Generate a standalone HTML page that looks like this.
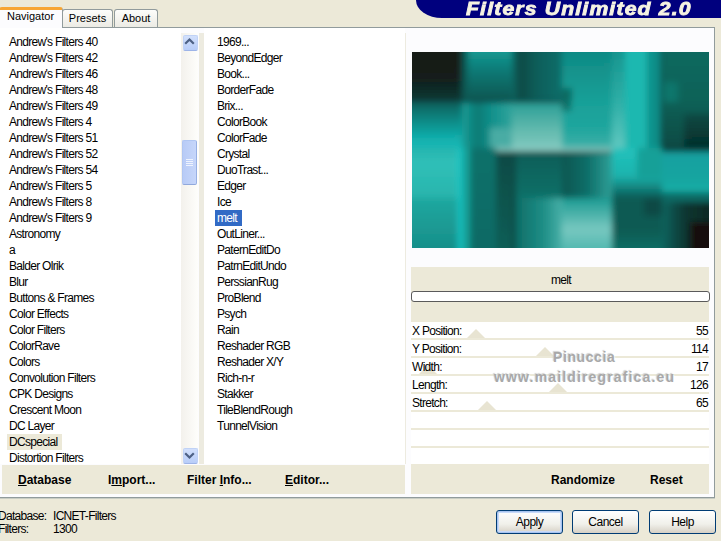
<!DOCTYPE html>
<html><head><meta charset="utf-8">
<style>
*{margin:0;padding:0;box-sizing:border-box}
html,body{width:721px;height:541px;overflow:hidden;background:#ECE9D8;font-family:"Liberation Sans",sans-serif;font-size:11px;color:#000}
.a{position:absolute}
#banner{left:416px;top:0;width:305px;height:18px;background:#00007E;border-bottom-left-radius:26px 18px}
#title{left:466px;top:-1px;font-size:18px;line-height:20px;font-weight:bold;font-style:italic;color:#F6F3E2;white-space:nowrap;letter-spacing:1px;transform-origin:0 0;transform:scaleX(1.175);-webkit-text-stroke:0.8px #F6F3E2}
.tab{top:9px;height:18px;background:linear-gradient(#FDFDFB,#ECEBE4);border:1px solid #919B9C;border-bottom:none;border-radius:3px 3px 0 0;text-align:center;line-height:16px}
#tnav{left:-1px;top:7px;width:64px;height:21px;background:#FCFCFE;border:1px solid #919B9C;border-top:3px solid #F7A533;border-bottom:none;border-radius:3px 3px 0 0;line-height:12px;padding-left:7px;z-index:2}
#panel{left:0;top:27px;width:715px;height:471px;background:#FCFCFE;border:1px solid #919B9C;border-left:none}
#list1{left:0;top:28px;width:181px;height:436px;background:#fff;overflow:hidden}
#list2{left:204px;top:28px;width:201px;height:436px;background:#fff;overflow:hidden}
.row{position:absolute;height:16px;line-height:16px;white-space:nowrap;font-size:12px;letter-spacing:-0.7px}
#sb{left:181px;top:33px;width:17px;height:431px;background:linear-gradient(90deg,#F3F1EC,#FEFEFB)}
#sep{left:199px;top:33px;width:5px;height:431px;background:#EDEBE0}
.sbbtn{position:absolute;left:2px;width:15px;height:16px;background:linear-gradient(#C9DAFC,#B3CAF7);border:1px solid #B8CCF5;border-radius:2px}
#thumb{left:183px;top:140px;width:15px;height:45px;background:linear-gradient(90deg,#BCCFF8,#C5D6FA);border:1px solid #A0B8EC;border-radius:2px}
#prev{left:412px;top:52px;width:297px;height:196px;background:#0d8080;overflow:hidden}
#rsep{left:405px;top:33px;width:1px;height:431px;background:#EDEBE0}
#meltbar{left:411px;top:267px;width:298px;height:56px;background:#ECE9D8}
#slider{left:411px;top:291px;width:299px;height:11px;background:#fff;border:1px solid #5A5A5A;border-radius:3px}
.prow{position:absolute;left:411px;width:298px;height:18px;background:#fff;border-bottom:2px solid #ECE9D8}
.plab{position:absolute;left:1px;top:3px;line-height:13px;font-size:12px;letter-spacing:-0.7px;white-space:nowrap}
.pval{position:absolute;right:1px;top:3px;line-height:13px;font-size:12px;letter-spacing:-0.7px}
.tri{position:absolute;width:0;height:0;border-left:9px solid transparent;border-right:9px solid transparent;border-bottom:9px solid #E8E4D2;top:7px}
#bbar1{left:2px;top:465px;width:403px;height:29px;background:#ECE9D8}
#bbar2{left:411px;top:465px;width:298px;height:29px;background:#ECE9D8}
.bb{position:absolute;top:473px;margin-left:-1px;font-weight:bold;line-height:14px;font-size:12px;white-space:nowrap}
.u{text-decoration:underline}
.btn{position:absolute;top:510px;width:67px;height:24px;font-size:12px;letter-spacing:-0.5px;border:1px solid #003C74;border-radius:3px;background:linear-gradient(#FFFFFF,#F0F0EA 60%,#D6D0C5);text-align:center;line-height:23px}
#apply{box-shadow:inset 0 0 0 1px #A8C4F0, inset 0 0 0 2px #C8DAF8}
.st{position:absolute;line-height:13px;white-space:nowrap;font-size:12px;letter-spacing:-0.7px}
</style></head><body>
<div id="banner" class="a"></div>
<div id="title" class="a">Filters Unlimited 2.0</div>

<div id="panel" class="a"></div>
<div class="a" style="left:0;top:498px;width:715px;height:1px;background:#C9CDC4"></div>
<div class="tab a" style="left:62px;width:51px">Presets</div>
<div class="tab a" style="left:114px;width:44px">About</div>
<div id="tnav" class="a">Navigator</div>

<div id="list1" class="a"><div class="a" style="left:7px;top:406px;width:55px;height:16px;background:#ECE9D8"></div><div class="row" style="top:6px;left:9px">Andrew's Filters 40</div><div class="row" style="top:22px;left:9px">Andrew's Filters 42</div><div class="row" style="top:38px;left:9px">Andrew's Filters 46</div><div class="row" style="top:54px;left:9px">Andrew's Filters 48</div><div class="row" style="top:70px;left:9px">Andrew's Filters 49</div><div class="row" style="top:86px;left:9px">Andrew's Filters 4</div><div class="row" style="top:102px;left:9px">Andrew's Filters 51</div><div class="row" style="top:118px;left:9px">Andrew's Filters 52</div><div class="row" style="top:134px;left:9px">Andrew's Filters 54</div><div class="row" style="top:150px;left:9px">Andrew's Filters 5</div><div class="row" style="top:166px;left:9px">Andrew's Filters 8</div><div class="row" style="top:182px;left:9px">Andrew's Filters 9</div><div class="row" style="top:198px;left:9px">Astronomy</div><div class="row" style="top:214px;left:9px">a</div><div class="row" style="top:230px;left:9px">Balder Olrik</div><div class="row" style="top:246px;left:9px">Blur</div><div class="row" style="top:262px;left:9px">Buttons &amp; Frames</div><div class="row" style="top:278px;left:9px">Color Effects</div><div class="row" style="top:294px;left:9px">Color Filters</div><div class="row" style="top:310px;left:9px">ColorRave</div><div class="row" style="top:326px;left:9px">Colors</div><div class="row" style="top:342px;left:9px">Convolution Filters</div><div class="row" style="top:358px;left:9px">CPK Designs</div><div class="row" style="top:374px;left:9px">Crescent Moon</div><div class="row" style="top:390px;left:9px">DC Layer</div><div class="row" style="top:406px;left:9px">DCspecial</div><div class="row" style="top:422px;left:9px">Distortion Filters</div></div>
<div id="sep" class="a"></div>
<div id="sb" class="a"></div>
<div class="a" style="left:183px;top:35px;width:15px;height:16px;background:linear-gradient(#D2E0FC,#B8CDF8);border:1px solid #C0D2F6;border-bottom:1px solid #9DB4E8;border-radius:2px"><svg width="13" height="14" style="position:absolute;left:0;top:0"><path d="M1.2 7.8 L5.5 3.5 L9.8 7.8" stroke="#4D6185" stroke-width="2.2" fill="none"/></svg></div>
<div class="a" style="left:183px;top:448px;width:15px;height:16px;background:linear-gradient(#D2E0FC,#B8CDF8);border:1px solid #C0D2F6;border-bottom:1px solid #9DB4E8;border-radius:2px"><svg width="13" height="14" style="position:absolute;left:0;top:0"><path d="M1.2 4.2 L5.5 8.5 L9.8 4.2" stroke="#4D6185" stroke-width="2.2" fill="none"/></svg></div>
<div class="a" style="left:182px;top:140px;width:15px;height:45px;background:linear-gradient(90deg,#B8CBF6,#C6D6FA);border:1px solid #B0C6F2;border-right-color:#98B0E4;border-bottom-color:#90A8DC;border-radius:2px"><div class="a" style="left:3px;top:18px;width:7px;height:1px;background:#EEF3FE;box-shadow:0 2px 0 #EEF3FE,0 4px 0 #EEF3FE,0 6px 0 #EEF3FE"></div></div>
<div id="list2" class="a"><div class="a" style="left:11px;top:182px;width:27px;height:16px;background:#316AC5"></div><div class="row" style="top:6px;left:13px">1969...</div><div class="row" style="top:22px;left:13px">BeyondEdger</div><div class="row" style="top:38px;left:13px">Book...</div><div class="row" style="top:54px;left:13px">BorderFade</div><div class="row" style="top:70px;left:13px">Brix...</div><div class="row" style="top:86px;left:13px">ColorBook</div><div class="row" style="top:102px;left:13px">ColorFade</div><div class="row" style="top:118px;left:13px">Crystal</div><div class="row" style="top:134px;left:13px">DuoTrast...</div><div class="row" style="top:150px;left:13px">Edger</div><div class="row" style="top:166px;left:13px">Ice</div><div class="row" style="top:182px;left:13px" ><span style="color:#fff">melt</span></div><div class="row" style="top:198px;left:13px">OutLiner...</div><div class="row" style="top:214px;left:13px">PaternEditDo</div><div class="row" style="top:230px;left:13px">PatrnEditUndo</div><div class="row" style="top:246px;left:13px">PerssianRug</div><div class="row" style="top:262px;left:13px">ProBlend</div><div class="row" style="top:278px;left:13px">Psych</div><div class="row" style="top:294px;left:13px">Rain</div><div class="row" style="top:310px;left:13px">Reshader RGB</div><div class="row" style="top:326px;left:13px">Reshader X/Y</div><div class="row" style="top:342px;left:13px">Rich-n-r</div><div class="row" style="top:358px;left:13px">Stakker</div><div class="row" style="top:374px;left:13px">TileBlendRough</div><div class="row" style="top:390px;left:13px">TunnelVision</div></div>
<div id="rsep" class="a"></div>

<div id="prev" class="a"><svg width="297" height="196" style="position:absolute;left:0;top:0"><defs><linearGradient id="q0" x1="0" y1="0" x2="0" y2="1"><stop offset="0" stop-color="#141a17"/><stop offset="0.6" stop-color="#131d1a"/><stop offset="1" stop-color="#0c3a36"/></linearGradient><linearGradient id="q1" x1="0" y1="0" x2="0" y2="1"><stop offset="0" stop-color="#0b5e5a"/><stop offset="0.45" stop-color="#0f8e8a"/><stop offset="0.8" stop-color="#12b0ae"/><stop offset="1" stop-color="#16b8b5"/></linearGradient><linearGradient id="q2" x1="0" y1="0" x2="0" y2="1"><stop offset="0" stop-color="#18aaa2"/><stop offset="0.5" stop-color="#0e7a76"/><stop offset="1" stop-color="#0a5550"/></linearGradient><linearGradient id="q3" x1="0" y1="0" x2="1" y2="0"><stop offset="0" stop-color="#15a09a"/><stop offset="0.3" stop-color="#0e7a74"/><stop offset="0.6" stop-color="#12918c"/><stop offset="1" stop-color="#30a49c"/></linearGradient><linearGradient id="q4" x1="0" y1="0" x2="1" y2="0"><stop offset="0" stop-color="#0b6a65"/><stop offset="0.15" stop-color="#094a45"/><stop offset="0.5" stop-color="#0b5e5a"/><stop offset="1" stop-color="#0c6e6a"/></linearGradient><linearGradient id="q5" x1="0" y1="0" x2="0" y2="1"><stop offset="0" stop-color="#0d8580"/><stop offset="1" stop-color="#18a098"/></linearGradient><linearGradient id="q6" x1="0" y1="0" x2="0" y2="1"><stop offset="0" stop-color="#2a9e96"/><stop offset="0.6" stop-color="#62baae"/><stop offset="1" stop-color="#80c8be"/></linearGradient><linearGradient id="q7" x1="0" y1="0" x2="0" y2="1"><stop offset="0" stop-color="#18a098"/><stop offset="0.6" stop-color="#20a69e"/><stop offset="1" stop-color="#40b0a8"/></linearGradient><linearGradient id="q8" x1="0" y1="0" x2="0" y2="1"><stop offset="0" stop-color="#10908a"/><stop offset="0.6" stop-color="#30b0a8"/><stop offset="1" stop-color="#60c8c0"/></linearGradient><linearGradient id="q9" x1="0" y1="0" x2="0" y2="1"><stop offset="0" stop-color="#0c6a60"/><stop offset="1" stop-color="#0b6258"/></linearGradient><linearGradient id="q10" x1="0" y1="0" x2="0" y2="1"><stop offset="0" stop-color="#0b6056"/><stop offset="1" stop-color="#094a44"/></linearGradient><linearGradient id="q11" x1="0" y1="0" x2="0" y2="1"><stop offset="0" stop-color="#0a4a44"/><stop offset="1" stop-color="#052e2a"/></linearGradient><linearGradient id="q12" x1="0" y1="0" x2="0" y2="1"><stop offset="0" stop-color="#26b4ae"/><stop offset="0.3" stop-color="#30c0b8"/><stop offset="1" stop-color="#28b4ac"/></linearGradient><linearGradient id="q13" x1="0" y1="0" x2="0" y2="1"><stop offset="0" stop-color="#20a8a0"/><stop offset="1" stop-color="#158a85"/></linearGradient><linearGradient id="q14" x1="0" y1="0" x2="0" y2="1"><stop offset="0" stop-color="#0e706a"/><stop offset="1" stop-color="#0c6a64"/></linearGradient><linearGradient id="q15" x1="0" y1="0" x2="0" y2="1"><stop offset="0" stop-color="#0a4a45"/><stop offset="1" stop-color="#0c6058"/></linearGradient><linearGradient id="q16" x1="0" y1="0" x2="0" y2="1"><stop offset="0" stop-color="#0c5e58"/><stop offset="1" stop-color="#107068"/></linearGradient><linearGradient id="q17" x1="0" y1="0" x2="1" y2="0"><stop offset="0" stop-color="#0e6e68"/><stop offset="0.6" stop-color="#1e8e86"/><stop offset="1" stop-color="#48b0a8"/></linearGradient><linearGradient id="q18" x1="0" y1="0" x2="1" y2="0"><stop offset="0" stop-color="#0b5550"/><stop offset="0.5" stop-color="#0e6e68"/><stop offset="1" stop-color="#30a098"/></linearGradient><linearGradient id="q19" x1="0" y1="0" x2="0" y2="1"><stop offset="0" stop-color="#1a9a92"/><stop offset="0.5" stop-color="#78c8c0"/><stop offset="1" stop-color="#40b0a8"/></linearGradient><linearGradient id="q20" x1="0" y1="0" x2="0" y2="1"><stop offset="0" stop-color="#22c2bc"/><stop offset="0.55" stop-color="#1cb4ae"/><stop offset="1" stop-color="#0a5a55"/></linearGradient><linearGradient id="q21" x1="0" y1="0" x2="0" y2="1"><stop offset="0" stop-color="#0b5a52"/><stop offset="0.5" stop-color="#0b5a52"/><stop offset="1" stop-color="#10786f"/></linearGradient><linearGradient id="q22" x1="0" y1="0" x2="0" y2="1"><stop offset="0" stop-color="#14a0a0"/><stop offset="0.7" stop-color="#15a5a0"/><stop offset="1" stop-color="#18b0a8"/></linearGradient><linearGradient id="q23" x1="0" y1="0" x2="1" y2="0"><stop offset="0" stop-color="#0d6560"/><stop offset="0.4" stop-color="#0a3530"/><stop offset="1" stop-color="#0a2420"/></linearGradient><filter id="bl" x="-10%" y="-10%" width="120%" height="120%"><feGaussianBlur stdDeviation="3.2"/></filter></defs><rect width="297" height="196" fill="#0e7a76"/><g filter="url(#bl)"><rect x="-12" y="-12" width="62" height="62" fill="url(#q0)"/><rect x="-12" y="50" width="62" height="46" fill="url(#q1)"/><rect x="50" y="-12" width="50" height="61" fill="url(#q2)"/><rect x="50" y="-12" width="6" height="61" fill="#0c5a55"/><rect x="50" y="49" width="50" height="47" fill="url(#q3)"/><rect x="78" y="76" width="22" height="20" fill="#48aca4"/><rect x="100" y="-12" width="50" height="61" fill="url(#q4)"/><rect x="150" y="-12" width="50" height="61" fill="url(#q5)"/><rect x="150" y="36" width="10" height="13" fill="#0b6a62"/><rect x="50" y="48" width="100" height="3" fill="#0a4a48"/><rect x="100" y="51" width="50" height="45" fill="url(#q6)"/><rect x="150" y="49" width="50" height="47" fill="url(#q7)"/><rect x="150" y="49" width="9" height="10" fill="#0d7068"/><rect x="200" y="-12" width="13" height="108" fill="url(#q8)"/><rect x="213" y="-12" width="22" height="108" fill="#1ab8b0"/><rect x="235" y="-12" width="13" height="108" fill="#10908a"/><rect x="248" y="-12" width="2" height="108" fill="#0a4a48"/><rect x="250" y="-12" width="59" height="62" fill="url(#q9)"/><rect x="252" y="30" width="14" height="55" fill="#0f766c"/><rect x="250" y="50" width="59" height="46" fill="url(#q10)"/><rect x="272" y="62" width="37" height="34" fill="url(#q11)"/><rect x="-12" y="96" width="58" height="50" fill="url(#q12)"/><rect x="-12" y="146" width="58" height="62" fill="url(#q13)"/><rect x="46" y="96" width="4" height="112" fill="#18c8c8"/><rect x="50" y="96" width="8" height="112" fill="#14a098"/><rect x="58" y="96" width="26" height="112" fill="url(#q14)"/><rect x="84" y="100" width="16" height="108" fill="url(#q15)"/><rect x="100" y="100" width="50" height="46" fill="url(#q16)"/><rect x="100" y="100" width="4" height="108" fill="#0a4a45"/><rect x="104" y="146" width="46" height="62" fill="url(#q17)"/><rect x="150" y="100" width="50" height="46" fill="url(#q18)"/><rect x="150" y="146" width="50" height="62" fill="url(#q19)"/><rect x="84" y="96" width="166" height="3" fill="#90d0c8"/><rect x="84" y="99" width="166" height="2" fill="#073a36"/><rect x="200" y="96" width="50" height="50" fill="url(#q20)"/><rect x="225" y="96" width="25" height="30" fill="#12a098"/><rect x="200" y="146" width="50" height="62" fill="url(#q21)"/><rect x="232" y="146" width="18" height="18" fill="#0a4a44"/><rect x="250" y="96" width="59" height="4" fill="#0a3a38"/><rect x="250" y="100" width="59" height="40" fill="url(#q22)"/><rect x="250" y="140" width="59" height="10" fill="#0c6a65"/><rect x="250" y="150" width="59" height="58" fill="url(#q23)"/><rect x="278" y="170" width="31" height="38" fill="#14100c"/></g></svg></div>
<div id="meltbar" class="a"></div>
<div class="a" style="left:412px;top:274px;width:298px;text-align:center;line-height:13px;font-size:12px;letter-spacing:-0.7px">melt</div>
<div id="slider" class="a"></div>
<div class="prow" style="top:322px"><div class="tri" style="left:55.5px"></div><div class="plab">X Position:</div><div class="pval">55</div></div><div class="prow" style="top:340px"><div class="tri" style="left:124.5px"></div><div class="plab">Y Position:</div><div class="pval">114</div></div><div class="prow" style="top:358px"><div class="tri" style="left:7.5px"></div><div class="plab">Width:</div><div class="pval">17</div></div><div class="prow" style="top:376px"><div class="tri" style="left:138px"></div><div class="plab">Length:</div><div class="pval">126</div></div><div class="prow" style="top:394px"><div class="tri" style="left:66.5px"></div><div class="plab">Stretch:</div><div class="pval">65</div></div><div class="prow" style="top:412px"></div><div class="prow" style="top:430px"></div><div class="prow" style="top:448px"></div>

<div class="a" style="left:553px;top:349px;font-size:14px;font-weight:bold;color:#A8A8A8;letter-spacing:0.6px;line-height:16px;text-shadow:1px 1px 1px #fff,-1px -1px 1px #D0D0D0">Pinuccia</div>
<div class="a" style="left:494px;top:369px;font-size:14px;font-weight:bold;color:#A8A8A8;letter-spacing:1.15px;line-height:16px;text-shadow:1px 1px 1px #fff,-1px -1px 1px #D0D0D0">www.maildiregrafica.eu</div>
<div id="bbar1" class="a"></div>
<div id="bbar2" class="a"></div>
<div class="bb" style="left:19px"><span class="u">D</span>atabase</div>
<div class="bb" style="left:109px">I<span class="u">m</span>port...</div>
<div class="bb" style="left:188px">Filter <span class="u">I</span>nfo...</div>
<div class="bb" style="left:286px"><span class="u">E</span>ditor...</div>
<div class="bb" style="left:552px">Randomize</div>
<div class="bb" style="left:651px">Reset</div>

<div class="st" style="left:-2px;top:510px">Database:</div>
<div class="st" style="left:53px;top:510px">ICNET-Filters</div>
<div class="st" style="left:-2px;top:523px">Filters:</div>
<div class="st" style="left:53px;top:523px">1300</div>

<div id="apply" class="btn" style="left:496px">Apply</div>
<div class="btn" style="left:572px">Cancel</div>
<div class="btn" style="left:649px">Help</div>
</body></html>
